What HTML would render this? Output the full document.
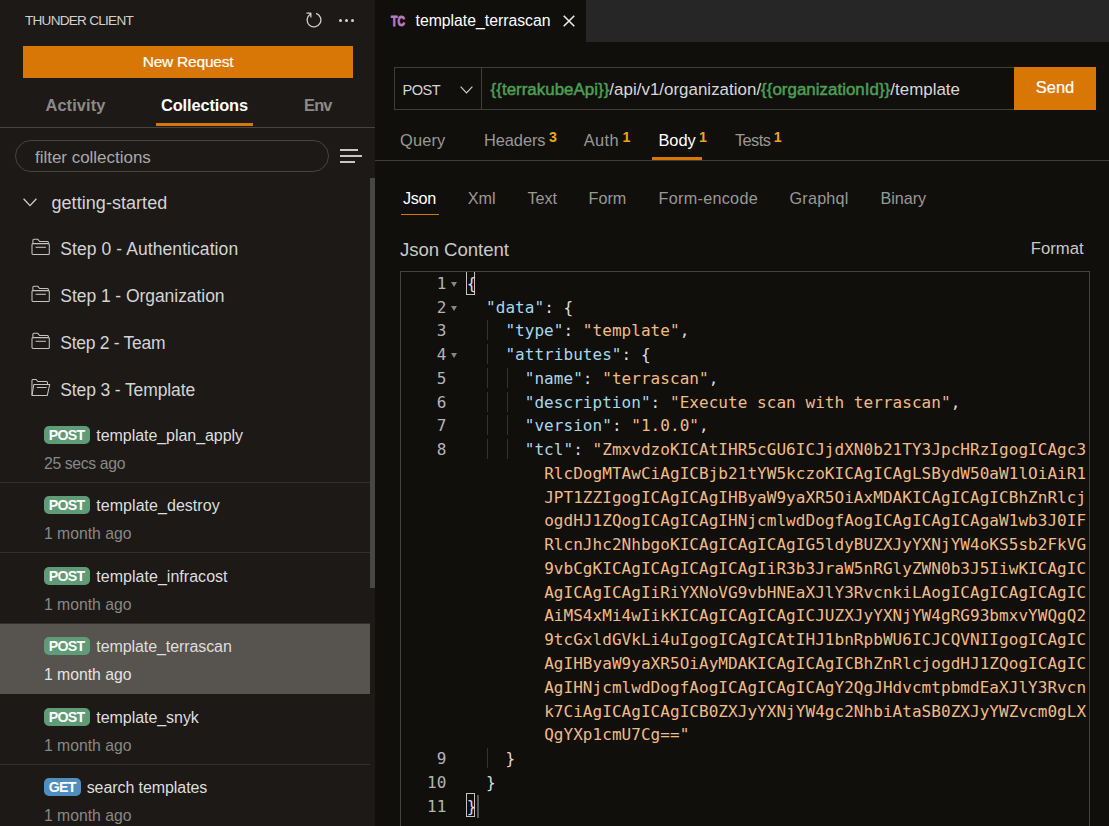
<!DOCTYPE html>
<html lang="en"><head><meta charset="utf-8"><title>Thunder Client - template_terrascan</title>
<style>
*{box-sizing:border-box;margin:0;padding:0}
html,body{width:1109px;height:826px;overflow:hidden;background:#110f0c}
body{position:relative;font-family:"Liberation Sans",sans-serif;color:#ccc}
.t{position:absolute;white-space:nowrap;line-height:1}
#side{position:absolute;left:0;top:0;width:375px;height:826px;background:#1c1917;overflow:hidden}
#title{font-size:13.6px;color:#d0d0d0;line-height:18.8px;margin-top:0.9px}
#dots{position:absolute;left:338.65px;top:18.7px;width:17px;height:3px}
#dots i{position:absolute;top:0;width:3.1px;height:3.1px;border-radius:50%;background:#d4d4d4}
#dots i:nth-child(1){left:0}#dots i:nth-child(2){left:6.4px}#dots i:nth-child(3){left:12.7px}
#newreq{position:absolute;left:23px;top:46px;width:330px;height:32px;background:#d97706;color:#fff;text-align:center;font-size:15.5px;letter-spacing:-0.22px;line-height:31.6px;-webkit-text-stroke:0.2px #fff}
.stab{top:94px;font-size:16.4px;font-weight:bold;color:#8c8a88;line-height:22px}
.stab.on{color:#fff}
#col-ul{position:absolute;left:156px;top:123px;width:97px;height:3px;background:#d97706}
#side-hr{position:absolute;left:0;top:127px;width:375px;height:1px;background:#474442}
#filter{position:absolute;left:15px;top:140px;width:314px;height:32px;border:1px solid #474442;border-radius:16px}
#filter-t{left:19px;top:5.8px;font-size:17px;line-height:22px;color:#a9a9a9}
#sort{position:absolute;left:340px;top:149.3px}
#sort i{display:block;height:1.3px;background:#c6c6c6;margin-bottom:4.7px}
.tree{font-size:17.5px;line-height:26px;color:#d4d4d4}
.ficon{position:absolute;left:30.5px;width:20px;height:18px}
.fold{display:block}
.ri{position:absolute;left:0;width:370px;height:70px}
.req{position:absolute;left:0;width:370px;height:70.5px;border-bottom:1px solid #332f2c}
.req.sel{background:#57534e;border-bottom-color:#57534e}
.badge{position:absolute;left:44px;top:14px;height:18px;border-radius:5px;color:#fff;font-size:14.2px;text-align:center;line-height:19.6px}
.badge b{font-weight:bold;letter-spacing:-0.75px;margin-left:-0.7px}
.badge.post{width:46px;background:#5f9b76}
.badge.get{width:37px;background:#4f8fbf}
.rn{left:96.3px;top:12.5px;font-size:16px;line-height:22px;color:#dedede}
.badge.get + .rn{left:86.7px}
.rt{left:44px;top:40.9px;font-size:15.75px;line-height:22px;color:#8a8886}
.sel .rt{color:#e4e4e4}
#thumb{position:absolute;left:370px;top:178px;width:5px;height:410px;background:#474747}
#ed{position:absolute;left:375px;top:0;width:734px;height:826px;background:#110f0c;overflow:hidden}
#ed > *{position:absolute}
#tabbar{left:0;top:0;width:734px;height:42px;background:#262626}
#tab{left:0;top:0;width:211px;height:42px;background:#110f0c}
#tc{position:absolute;left:15.5px;top:12.7px;font-size:14.5px;font-weight:bold;color:#b87cc6;-webkit-text-stroke:0.9px #b87cc6;letter-spacing:0.3px;line-height:16px;transform:scaleX(0.72);transform-origin:left}
#tabname{left:40.5px;top:10px;font-size:15.8px;line-height:22px;color:#fff}
#x{position:absolute;left:188px;top:15px}
#urlbar{left:19px;top:67px;width:621px;height:43px;border:1px solid #403d3a}
#method{left:7.5px;top:10.8px;font-size:14.6px;line-height:22px;color:#d4d4d4}
#mchev{position:absolute;left:65px;top:18px}
#udiv{position:absolute;left:86px;top:0;width:1px;height:41px;background:#403d3a}
#url{left:95.6px;top:11.2px;font-size:16.9px;line-height:22px;color:#d8d8d8}
#url .v{color:#4c9f54;-webkit-text-stroke:0.5px #4c9f54}
#send{left:639px;top:67px;width:82px;height:43px;background:#d97706;color:#fff;-webkit-text-stroke:0.2px #fff;font-size:16.5px;text-align:center;line-height:40px}
.rtab{top:129px;font-size:16.4px;line-height:22px;color:#9a9896}
.rtab.on{color:#fff}
.rtab sup{position:absolute;left:100%;margin-left:3.5px;top:0.2px;font-size:14.2px;font-weight:bold;color:#eaa51a;line-height:16px}
#body-ul{left:277px;top:157px;width:50px;height:3px;background:#d97706}
#ed-hr{left:0;top:160px;width:734px;height:1px;background:#403d3a}
.sub{top:187px;font-size:16.2px;line-height:22px;color:#9a9896}
.sub.on{color:#fff}
#json-ul{left:26px;top:213.5px;width:38px;height:1.5px;background:#d97706}
#jc{left:25px;top:237.9px;font-size:18.6px;line-height:24px;color:#c8c8c8}
#fmt{left:655.8px;top:238px;font-size:16.7px;line-height:22px;color:#c8c8c8;font-family:"Liberation Sans",sans-serif}
#code{left:25px;top:271px;width:690px;height:560px;border:1px solid #46433f;font-family:"DejaVu Sans Mono","Liberation Mono",monospace;font-size:16px}
#code > *{position:absolute}
.cl{left:0;width:688px;height:23.76px;line-height:23.76px;white-space:pre}
.ln{position:absolute;left:0;width:45.5px;text-align:right;color:#b4b4b4;letter-spacing:0.06px}
.fa{position:absolute;left:49.7px;top:10.2px;width:0;height:0;border-left:3.5px solid transparent;border-right:3.5px solid transparent;border-top:5.2px solid #868686}
.ct{position:absolute;left:65.7px;letter-spacing:0.046px}
.k{color:#a8d8ea}.s{color:#f0bc85}.p{color:#dcdcdc}
.ig{width:1px;background:#353331}
#cursor{left:65px;top:0;width:9.3px;height:23px;border:1px solid #c4c4c4;border-top:0}
#cursor2{left:65px;top:521px;width:9.4px;height:24.2px;border:1px solid #c4c4c4}
#caret{left:76px;top:522.8px;width:2px;height:23px;background:#5a5a5a}
#gs{font-size:18px}

#title{letter-spacing:-0.756px}
#tab-act{letter-spacing:0.085px}
#tab-col{letter-spacing:-0.122px}
#tab-env{letter-spacing:-0.788px}
#filter-t{letter-spacing:-0.023px}
#gs{letter-spacing:0.048px}
#st0{letter-spacing:0.079px}
#st1{letter-spacing:-0.056px}
#st2{letter-spacing:-0.287px}
#st3{letter-spacing:-0.126px}
#rn0{letter-spacing:-0.051px}
#rt0{letter-spacing:-0.349px}
#rn1{letter-spacing:0.042px}
#rt1{letter-spacing:-0.016px}
#rt2{letter-spacing:-0.016px}
#rt3{letter-spacing:-0.016px}
#rt4{letter-spacing:-0.016px}
#rt5{letter-spacing:-0.016px}
#rn2{letter-spacing:0.031px}
#rn3{letter-spacing:-0.087px}
#rn4{letter-spacing:-0.052px}
#rn5{letter-spacing:-0.078px}
#tabname{letter-spacing:-0.013px}
#method{letter-spacing:-0.559px}
#url{letter-spacing:0.027px}
#rtn-Query{letter-spacing:0.152px}
#rtn-Headers{letter-spacing:-0.065px}
#rtn-Auth{letter-spacing:0.370px}
#rtn-Body{letter-spacing:-0.065px}
#rtn-Tests{letter-spacing:-0.593px}
#sub-Json{letter-spacing:-0.301px}
#sub-Xml{letter-spacing:0.070px}
#sub-Text{letter-spacing:-0.072px}
#sub-Form{letter-spacing:-0.016px}
#sub-Form-encode{letter-spacing:0.294px}
#sub-Graphql{letter-spacing:0.215px}
#sub-Binary{letter-spacing:-0.015px}
#jc{letter-spacing:-0.065px}
#fmt{letter-spacing:0.007px}
</style></head><body>
<div id="side">
<div class="t" id="title" style="left:25px;top:11px">THUNDER CLIENT</div>
<svg id="refresh" viewBox="0 0 16 16" width="20" height="20" style="position:absolute;left:304px;top:10px"><path fill="#d4d4d4" fill-rule="evenodd" d="M4.681 3H2V2h3.5l.5.5V6H5V4a5 5 0 1 0 4.53-.761l.302-.954A6 6 0 1 1 4.681 3z"/></svg>
<div id="dots"><i></i><i></i><i></i></div>
<div id="newreq"><span>New Request</span></div>
<div class="t stab" id="tab-act" style="left:45.5px">Activity</div>
<div class="t stab on" id="tab-col" style="left:161px">Collections</div>
<div class="t stab" id="tab-env" style="left:304px">Env</div>
<div id="col-ul"></div><div id="side-hr"></div>
<div id="filter"><span class="t" id="filter-t">filter collections</span></div>
<div id="sort"><i style="width:18px"></i><i style="width:21.5px"></i><i style="width:14.5px"></i></div>
<svg id="chev" viewBox="0 0 14 9" width="14" height="9" style="position:absolute;left:23px;top:198px"><path d="M0.6 0.8 L7 7.6 L13.4 0.8" fill="none" stroke="#d0d0d0" stroke-width="1.3"/></svg>
<div class="t tree" id="gs" style="left:51.5px;top:190.4px">getting-started</div>
<div class="ficon" style="top:238px"><svg class="fold" viewBox="0 0 20 18" width="20" height="18"><path d="M1.9 5.6 V2.3 Q1.9 1.3 2.9 1.3 H6.8 L8.6 3.5 H16.4 Q17.4 3.5 17.4 4.5 V5.6" fill="none" stroke="#c6c3c0" stroke-width="1.05"/><rect x="1" y="5.6" width="17.3" height="10.9" rx="1" fill="none" stroke="#c6c3c0" stroke-width="1.05"/><path d="M4.6 9.3 H14.9" fill="none" stroke="#c6c3c0" stroke-width="1.05"/></svg></div>
<div class="t tree" id="st0" style="left:60.3px;top:235.9px">Step 0 - Authentication</div>
<div class="ficon" style="top:285px"><svg class="fold" viewBox="0 0 20 18" width="20" height="18"><path d="M1.9 5.6 V2.3 Q1.9 1.3 2.9 1.3 H6.8 L8.6 3.5 H16.4 Q17.4 3.5 17.4 4.5 V5.6" fill="none" stroke="#c6c3c0" stroke-width="1.05"/><rect x="1" y="5.6" width="17.3" height="10.9" rx="1" fill="none" stroke="#c6c3c0" stroke-width="1.05"/><path d="M4.6 9.3 H14.9" fill="none" stroke="#c6c3c0" stroke-width="1.05"/></svg></div>
<div class="t tree" id="st1" style="left:60.3px;top:282.9px">Step 1 - Organization</div>
<div class="ficon" style="top:332px"><svg class="fold" viewBox="0 0 20 18" width="20" height="18"><path d="M1.9 5.6 V2.3 Q1.9 1.3 2.9 1.3 H6.8 L8.6 3.5 H16.4 Q17.4 3.5 17.4 4.5 V5.6" fill="none" stroke="#c6c3c0" stroke-width="1.05"/><rect x="1" y="5.6" width="17.3" height="10.9" rx="1" fill="none" stroke="#c6c3c0" stroke-width="1.05"/><path d="M4.6 9.3 H14.9" fill="none" stroke="#c6c3c0" stroke-width="1.05"/></svg></div>
<div class="t tree" id="st2" style="left:60.3px;top:329.9px">Step 2 - Team</div>
<div class="ficon" style="top:379px"><svg class="fold" viewBox="0 0 20 18" width="20" height="18"><path d="M0.95 15.9 V1.5 Q0.95 0.5 1.95 0.5 H5.1 L6.8 2.5 H15.5 Q16.5 2.5 16.5 3.5 V5.5" fill="none" stroke="#c6c3c0" stroke-width="1.05"/><path d="M2.8 5.5 H18.7 L16.3 16.4 H1.0 Z" fill="none" stroke="#c6c3c0" stroke-width="1.05" stroke-linejoin="round"/><path d="M5.7 8.5 H15.6" fill="none" stroke="#c6c3c0" stroke-width="1.05"/></svg></div>
<div class="t tree" id="st3" style="left:60.3px;top:376.9px">Step 3 - Template</div>
<div class="req" style="top:412.0px"><div class="ri" style="top:0px"><span class="badge post"><b>POST</b></span><span class="t rn" id="rn0">template_plan_apply</span><span class="t rt" id="rt0">25 secs ago</span></div></div>
<div class="req" style="top:482.5px"><div class="ri" style="top:-0.5px"><span class="badge post"><b>POST</b></span><span class="t rn" id="rn1">template_destroy</span><span class="t rt" id="rt1">1 month ago</span></div></div>
<div class="req" style="top:553.0px"><div class="ri" style="top:0px"><span class="badge post"><b>POST</b></span><span class="t rn" id="rn2">template_infracost</span><span class="t rt" id="rt2">1 month ago</span></div></div>
<div class="req sel" style="top:623.5px"><div class="ri" style="top:-0.5px"><span class="badge post"><b>POST</b></span><span class="t rn" id="rn3">template_terrascan</span><span class="t rt" id="rt3">1 month ago</span></div></div>
<div class="req" style="top:694.0px"><div class="ri" style="top:0.2px"><span class="badge post"><b>POST</b></span><span class="t rn" id="rn4">template_snyk</span><span class="t rt" id="rt4">1 month ago</span></div></div>
<div class="req" style="top:764.5px"><div class="ri" style="top:-0.3px"><span class="badge get"><b>GET</b></span><span class="t rn" id="rn5">search templates</span><span class="t rt" id="rt5">1 month ago</span></div></div>
<div id="thumb"></div>
</div>
<div id="ed">
<div id="tabbar"></div><div id="tab"><span id="tc">TC</span><span class="t" id="tabname">template_terrascan</span><svg id="x" viewBox="0 0 12 12" width="12" height="12"><path d="M0.7 0.7 L11.3 11.3 M11.3 0.7 L0.7 11.3" stroke="#ececec" stroke-width="1.55"/></svg></div>
<div id="urlbar"><span class="t" id="method">POST</span><svg id="mchev" viewBox="0 0 13 8" width="13" height="8"><path d="M0.6 0.7 L6.5 6.8 L12.4 0.7" fill="none" stroke="#cfcfcf" stroke-width="1.2"/></svg><div id="udiv"></div><span class="t" id="url"><span class="v">{{terrakubeApi}}</span>/api/v1/organization/<span class="v">{{organizationId}}</span>/template</span></div>
<div id="send"><span>Send</span></div>
<div class="t rtab" id="rt-Query" style="left:25px"><span class="rtn" id="rtn-Query">Query</span></div>
<div class="t rtab" id="rt-Headers" style="left:109px"><span class="rtn" id="rtn-Headers">Headers</span><sup>3</sup></div>
<div class="t rtab" id="rt-Auth" style="left:208.79999999999995px"><span class="rtn" id="rtn-Auth">Auth</span><sup>1</sup></div>
<div class="t rtab on" id="rt-Body" style="left:283.5px"><span class="rtn" id="rtn-Body">Body</span><sup>1</sup></div>
<div class="t rtab" id="rt-Tests" style="left:360px"><span class="rtn" id="rtn-Tests">Tests</span><sup>1</sup></div>
<div id="body-ul"></div><div id="ed-hr"></div>
<div class="t sub on" id="sub-Json" style="left:28px">Json</div>
<div class="t sub" id="sub-Xml" style="left:92.69999999999999px">Xml</div>
<div class="t sub" id="sub-Text" style="left:152.60000000000002px">Text</div>
<div class="t sub" id="sub-Form" style="left:213.60000000000002px">Form</div>
<div class="t sub" id="sub-Form-encode" style="left:283.5px">Form-encode</div>
<div class="t sub" id="sub-Graphql" style="left:414.5px">Graphql</div>
<div class="t sub" id="sub-Binary" style="left:505.4px">Binary</div>
<div id="json-ul"></div>
<div class="t" id="jc">Json Content</div><div class="t" id="fmt">Format</div>
<div id="code"><div id="cursor"></div><div id="cursor2"></div><div id="caret"></div><div class="ig" style="left:86px;top:48.32px;height:20px"></div><div class="ig" style="left:86px;top:72.08px;height:20px"></div><div class="ig" style="left:86px;top:95.84px;height:20px"></div><div class="ig" style="left:86px;top:119.60px;height:20px"></div><div class="ig" style="left:86px;top:143.36px;height:20px"></div><div class="ig" style="left:86px;top:167.12px;height:20px"></div><div class="ig" style="left:86px;top:476.00px;height:20px"></div><div class="ig" style="left:106px;top:95.84px;height:20px"></div><div class="ig" style="left:106px;top:119.60px;height:20px"></div><div class="ig" style="left:106px;top:143.36px;height:20px"></div><div class="ig" style="left:106px;top:167.12px;height:20px"></div><div class="cl" style="top:-0.15px"><span class="ln">1</span><span class="fa"></span><span class="ct"><span class="p">{</span></span></div><div class="cl" style="top:23.61px"><span class="ln">2</span><span class="fa"></span><span class="ct">  <span class="k">&quot;data&quot;</span><span class="p">: {</span></span></div><div class="cl" style="top:47.37px"><span class="ln">3</span><span class="ct">    <span class="k">&quot;type&quot;</span><span class="p">: </span><span class="s">&quot;template&quot;</span><span class="p">,</span></span></div><div class="cl" style="top:71.13px"><span class="ln">4</span><span class="fa"></span><span class="ct">    <span class="k">&quot;attributes&quot;</span><span class="p">: {</span></span></div><div class="cl" style="top:94.89px"><span class="ln">5</span><span class="ct">      <span class="k">&quot;name&quot;</span><span class="p">: </span><span class="s">&quot;terrascan&quot;</span><span class="p">,</span></span></div><div class="cl" style="top:118.65px"><span class="ln">6</span><span class="ct">      <span class="k">&quot;description&quot;</span><span class="p">: </span><span class="s">&quot;Execute scan with terrascan&quot;</span><span class="p">,</span></span></div><div class="cl" style="top:142.41px"><span class="ln">7</span><span class="ct">      <span class="k">&quot;version&quot;</span><span class="p">: </span><span class="s">&quot;1.0.0&quot;</span><span class="p">,</span></span></div><div class="cl" style="top:166.17px"><span class="ln">8</span><span class="ct">      <span class="k">&quot;tcl&quot;</span><span class="p">: </span><span class="s">&quot;ZmxvdzoKICAtIHR5cGU6ICJjdXN0b21TY3JpcHRzIgogICAgc3</span></span></div><div class="cl" style="top:189.93px"><span class="ct">        <span class="s">RlcDogMTAwCiAgICBjb21tYW5kczoKICAgICAgLSBydW50aW1lOiAiR1</span></span></div><div class="cl" style="top:213.69px"><span class="ct">        <span class="s">JPT1ZZIgogICAgICAgIHByaW9yaXR5OiAxMDAKICAgICAgICBhZnRlcj</span></span></div><div class="cl" style="top:237.45px"><span class="ct">        <span class="s">ogdHJ1ZQogICAgICAgIHNjcmlwdDogfAogICAgICAgICAgaW1wb3J0IF</span></span></div><div class="cl" style="top:261.21px"><span class="ct">        <span class="s">RlcnJhc2NhbgoKICAgICAgICAgIG5ldyBUZXJyYXNjYW4oKS5sb2FkVG</span></span></div><div class="cl" style="top:284.97px"><span class="ct">        <span class="s">9vbCgKICAgICAgICAgICAgIiR3b3JraW5nRGlyZWN0b3J5IiwKICAgIC</span></span></div><div class="cl" style="top:308.73px"><span class="ct">        <span class="s">AgICAgICAgIiRiYXNoVG9vbHNEaXJlY3RvcnkiLAogICAgICAgICAgIC</span></span></div><div class="cl" style="top:332.49px"><span class="ct">        <span class="s">AiMS4xMi4wIikKICAgICAgICAgICJUZXJyYXNjYW4gRG93bmxvYWQgQ2</span></span></div><div class="cl" style="top:356.25px"><span class="ct">        <span class="s">9tcGxldGVkLi4uIgogICAgICAtIHJ1bnRpbWU6ICJCQVNIIgogICAgIC</span></span></div><div class="cl" style="top:380.01px"><span class="ct">        <span class="s">AgIHByaW9yaXR5OiAyMDAKICAgICAgICBhZnRlcjogdHJ1ZQogICAgIC</span></span></div><div class="cl" style="top:403.77px"><span class="ct">        <span class="s">AgIHNjcmlwdDogfAogICAgICAgICAgY2QgJHdvcmtpbmdEaXJlY3Rvcn</span></span></div><div class="cl" style="top:427.53px"><span class="ct">        <span class="s">k7CiAgICAgICAgICB0ZXJyYXNjYW4gc2NhbiAtaSB0ZXJyYWZvcm0gLX</span></span></div><div class="cl" style="top:451.29px"><span class="ct">        <span class="s">QgYXp1cmU7Cg==&quot;</span></span></div><div class="cl" style="top:475.05px"><span class="ln">9</span><span class="ct">    <span class="p">}</span></span></div><div class="cl" style="top:498.81px"><span class="ln">10</span><span class="ct">  <span class="p">}</span></span></div><div class="cl" style="top:522.57px"><span class="ln">11</span><span class="ct"><span class="p">}</span></span></div></div>
</div>
</body></html>
